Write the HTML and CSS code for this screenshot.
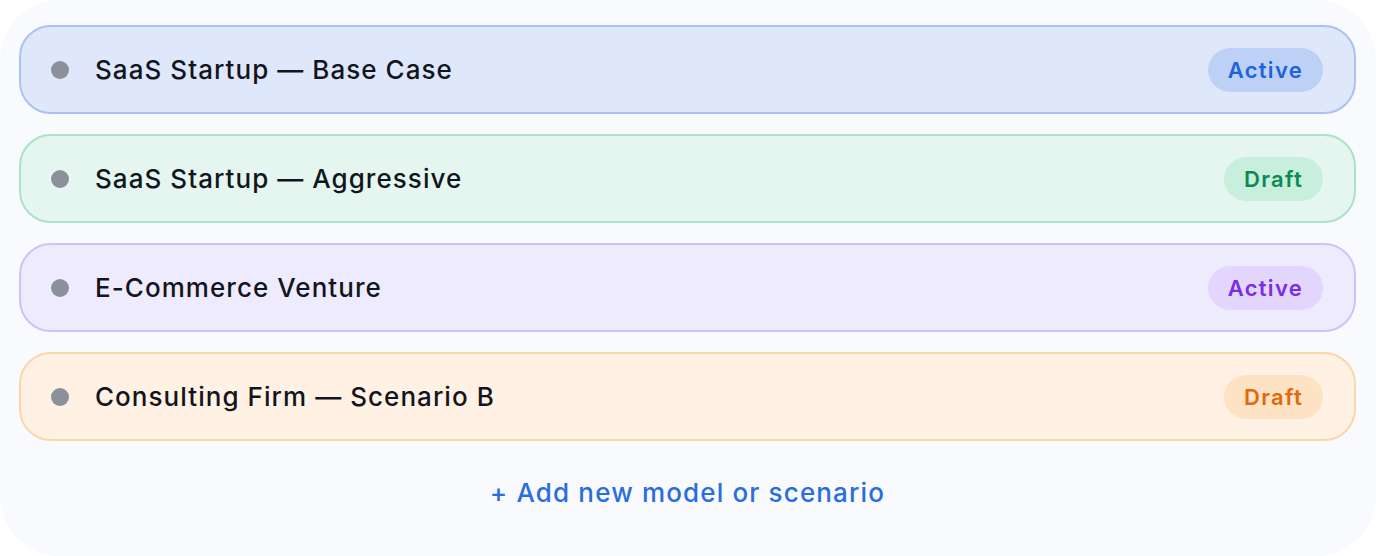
FILE: index.html
```
<!DOCTYPE html>
<html>
<head>
	<title>models</title>
	<meta charset="UTF-8">
	<link rel="stylesheet" href="styles.css">
</head>
<body>
	<div class="panel">
		<div class="list">
			<div class="row row_blue">
				<span class="dot"></span>
				<span class="name">SaaS Startup — Base Case</span>
				<span class="badge">Active</span>
			</div>
			<div class="row row_green">
				<span class="dot"></span>
				<span class="name">SaaS Startup — Aggressive</span>
				<span class="badge">Draft</span>
			</div>
			<div class="row row_purple">
				<span class="dot"></span>
				<span class="name">E-Commerce Venture</span>
				<span class="badge">Active</span>
			</div>
			<div class="row row_orange">
				<span class="dot"></span>
				<span class="name">Consulting Firm — Scenario B</span>
				<span class="badge">Draft</span>
			</div>
		</div>
		<div class="add">+ Add new model or scenario</div>
	</div>
</body>
</html>
```

FILE: styles.css
```
*{
	margin: 0px;
	padding: 0px;
	box-sizing: border-box;
}
body{
	background-color: #ffffff;
	font-family: Inter, "Noto Sans", sans-serif;
}
.panel{
	height: 556px;
	background-color: #f8fafd;
	border-radius: 60px;
	padding: 25px 20px 0 19px;
}
.list{
	display: flex;
	flex-direction: column;
	gap: 20px;
}
.row{
	height: 89px;
	display: flex;
	align-items: center;
	border: 2px solid;
	border-radius: 32px;
	padding: 0 31px 0 30px;
}
.dot{
	width: 18px;
	height: 18px;
	border-radius: 50%;
	background-color: #8b909b;
	margin-right: 26px;
}
.name{
	flex: 1;
	font-size: 26px;
	font-weight: 500;
	color: #12151d;
	letter-spacing: 1.05px;
}
.badge{
	height: 44px;
	line-height: 44px;
	padding: 0 20px;
	border-radius: 22px;
	font-size: 22px;
	font-weight: 600;
	letter-spacing: 1.3px;
}
.row_blue{
	background-color: #dfe8fb;
	border-color: #a9c2f3;
}
.row_blue .badge{
	background-color: #bdd1f7;
	color: #1f62da;
}
.row_green{
	background-color: #e4f6ef;
	border-color: #a9e3cc;
}
.row_green .badge{
	background-color: #c8eedd;
	color: #0c8a54;
}
.row_purple{
	background-color: #efebfe;
	border-color: #cfc2f7;
}
.row_purple .badge{
	background-color: #e2d6fd;
	color: #7a2ce6;
}
.row_orange{
	background-color: #fff1e3;
	border-color: #fbd6a8;
}
.row_orange .badge{
	background-color: #fde2c3;
	color: #dd6a0c;
}
.add{
	text-align: center;
	margin-top: 36px;
	font-size: 26px;
	font-weight: 500;
	color: #2a6de0;
	letter-spacing: 1.15px;
}
```
